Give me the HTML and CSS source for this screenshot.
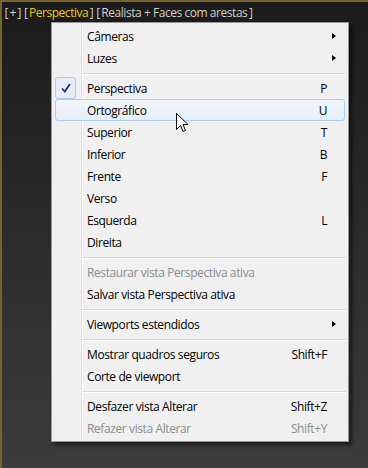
FILE: index.html
```html
<!DOCTYPE html>
<html lang="pt">
<head>
  <meta charset="UTF-8">
  <title>Viewport menu</title>
  <link rel="stylesheet" href="styles.css">
</head>
<body>
  <div class="viewport">
    <div class="label"><span class="br">[</span>+<span class="br">]</span><span class="br">[</span><span class="active">Perspectiva</span><span class="br">]</span><span class="br">[</span>Realista + Faces com arestas<span class="br">]</span></div>

    <div class="menu">
      <div class="item"><span class="text">Câmeras</span><span class="sub"><i class="arrow"></i></span></div>
      <div class="item"><span class="text">Luzes</span><span class="sub"><i class="arrow"></i></span></div>
      <div class="sep"></div>
      <div class="item checked">
        <span class="check">
          <svg width="10" height="10" viewBox="0 0 10 10"><path d="M1 5.5 L3.8 8.6 L9 1" fill="none" stroke="#1d2b86" stroke-width="1.7"/></svg>
        </span>
        <span class="text">Perspectiva</span><span class="key">P</span><span class="sub"></span>
      </div>
      <div class="item hover"><span class="text">Ortográfico</span><span class="key">U</span><span class="sub"></span></div>
      <div class="item"><span class="text">Superior</span><span class="key">T</span><span class="sub"></span></div>
      <div class="item"><span class="text">Inferior</span><span class="key">B</span><span class="sub"></span></div>
      <div class="item"><span class="text">Frente</span><span class="key">F</span><span class="sub"></span></div>
      <div class="item"><span class="text">Verso</span><span class="sub"></span></div>
      <div class="item"><span class="text">Esquerda</span><span class="key">L</span><span class="sub"></span></div>
      <div class="item"><span class="text">Direita</span><span class="sub"></span></div>
      <div class="sep"></div>
      <div class="item disabled"><span class="text">Restaurar vista Perspectiva ativa</span><span class="sub"></span></div>
      <div class="item"><span class="text">Salvar vista Perspectiva ativa</span><span class="sub"></span></div>
      <div class="sep"></div>
      <div class="item"><span class="text">Viewports estendidos</span><span class="sub"><i class="arrow"></i></span></div>
      <div class="sep"></div>
      <div class="item"><span class="text">Mostrar quadros seguros</span><span class="key">Shift+F</span><span class="sub"></span></div>
      <div class="item"><span class="text">Corte de viewport</span><span class="sub"></span></div>
      <div class="sep"></div>
      <div class="item"><span class="text">Desfazer vista Alterar</span><span class="key">Shift+Z</span><span class="sub"></span></div>
      <div class="item disabled"><span class="text">Refazer vista Alterar</span><span class="key">Shift+Y</span><span class="sub"></span></div>
    </div>

    <svg class="cursor" width="13" height="20" viewBox="0 0 13 20">
      <path d="M0.5 0.5 L0.5 16.5 L4.5 12.5 L7 18.5 L9.5 17.5 L7 11.5 L12 11.5 Z" fill="#fff" stroke="#000" stroke-width="1" stroke-linejoin="miter"/>
    </svg>
  </div>
</body>
</html>
```

FILE: styles.css
```css
body { margin: 0; font-family: "Open Sans", "Noto Sans", sans-serif; }
.viewport { position: relative; width: 366px; height: 466px; border-top: 2px solid #76642a; border-left: 2px solid #76642a; background: linear-gradient(#1b1b1b, #3c3c3c); overflow: hidden; }
.label { height: 20px; line-height: 21px; padding-left: 1px; font-size: 12px; letter-spacing: -0.45px; color: #cfcfcf; white-space: nowrap; }
.label .br { margin: 0 1.5px; }
.label .active { color: #e8c81c; }

.menu { margin-left: 49px; width: 292px; padding: 2px; border: 1px solid #979797; background: #f0f0f0; box-shadow: 3px 3px 4px rgba(0,0,0,0.55); background-image: linear-gradient(90deg, transparent 29px, #e2e3e3 29px, #e2e3e3 30px, #fff 30px, #fff 31px, transparent 31px); font-size: 12px; letter-spacing: -0.4px; color: #000; }
.item { position: relative; display: flex; align-items: center; height: 22px; margin: 0 1px; padding-left: 31px; box-sizing: border-box; border: 1px solid transparent; border-radius: 3px; white-space: nowrap; }
.item .text { flex: 1; }
.item .key { text-align: right; }
.item .sub { width: 17px; height: 7px; display: flex; padding-left: 5px; box-sizing: border-box; }
.arrow { width: 0; height: 0; border-top: 3.5px solid transparent; border-bottom: 3.5px solid transparent; border-left: 4px solid #000; }
.disabled { color: #8d8d8d; }
.hover { border-color: #a9cdf5; background: linear-gradient(#f2f6fb, #e6eef9); }
.check { position: absolute; left: -1px; top: -1px; width: 19px; height: 20px; border: 1px solid #aecbeb; border-radius: 3px; background: #e4edf8; display: flex; align-items: center; justify-content: center; }
.sep { height: 8px; margin-left: 28px; background: linear-gradient(transparent 4px, #d7d7d7 4px, #d7d7d7 5px, #fff 5px, #fff 6px, transparent 6px); }

.cursor { position: absolute; left: 174px; top: 111px; }
```
